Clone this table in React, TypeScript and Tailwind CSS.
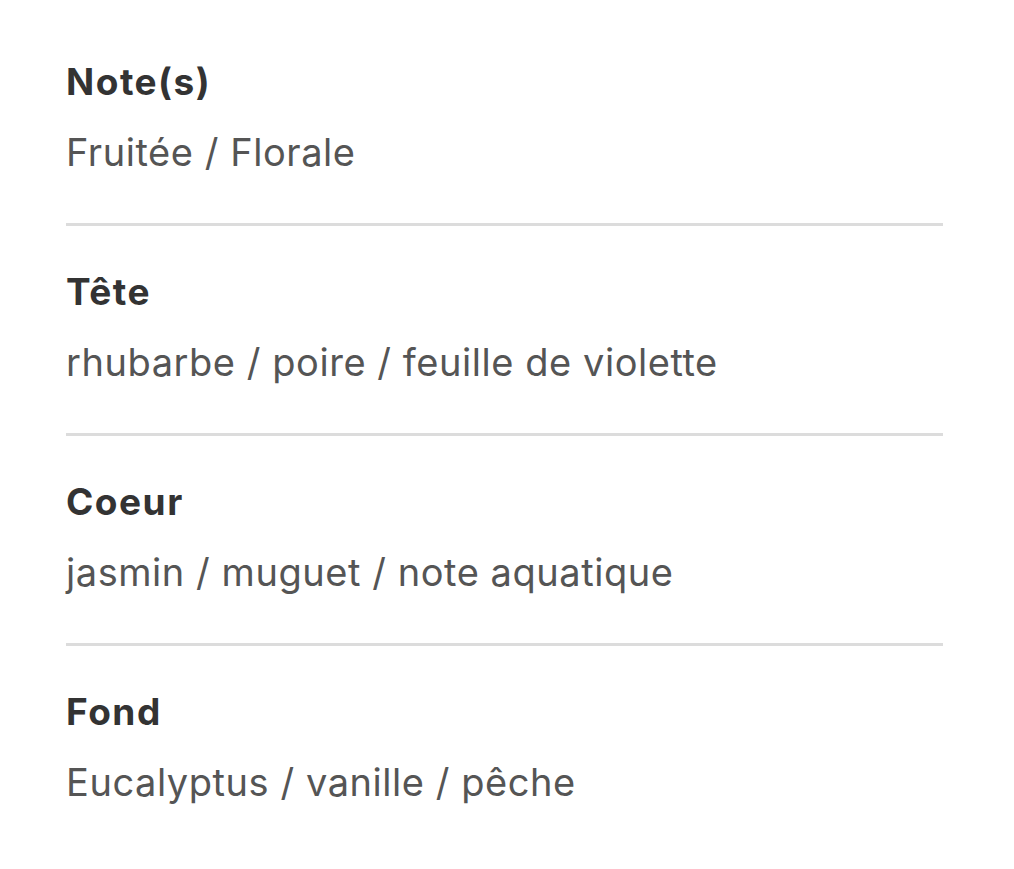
const notes = [
  { title: "Note(s)", value: "Fruitée / Florale" },
  { title: "Tête", value: "rhubarbe / poire / feuille de violette" },
  { title: "Coeur", value: "jasmin / muguet / note aquatique" },
  { title: "Fond", value: "Eucalyptus / vanille / pêche" },
];

const App = () => {
  return (
    <div className="min-h-screen bg-white pl-[66px] pr-[71px] pt-[16px] font-['Inter',sans-serif]">
      {notes.map((note, i) => (
        <div
          key={note.title}
          className={`pt-[44px] pb-[47px] ${i < notes.length - 1 ? "border-b-[3px] border-[#dcdcdc]" : ""}`}
        >
          <h3 className="text-[37px] leading-[44px] font-bold tracking-[1.5px] text-[#333333]">{note.title}</h3>
          <p className="mt-[24px] text-[38px] leading-[48px] tracking-[0.55px] text-[#555555]">{note.value}</p>
        </div>
      ))}
    </div>
  );
};

export default App;
